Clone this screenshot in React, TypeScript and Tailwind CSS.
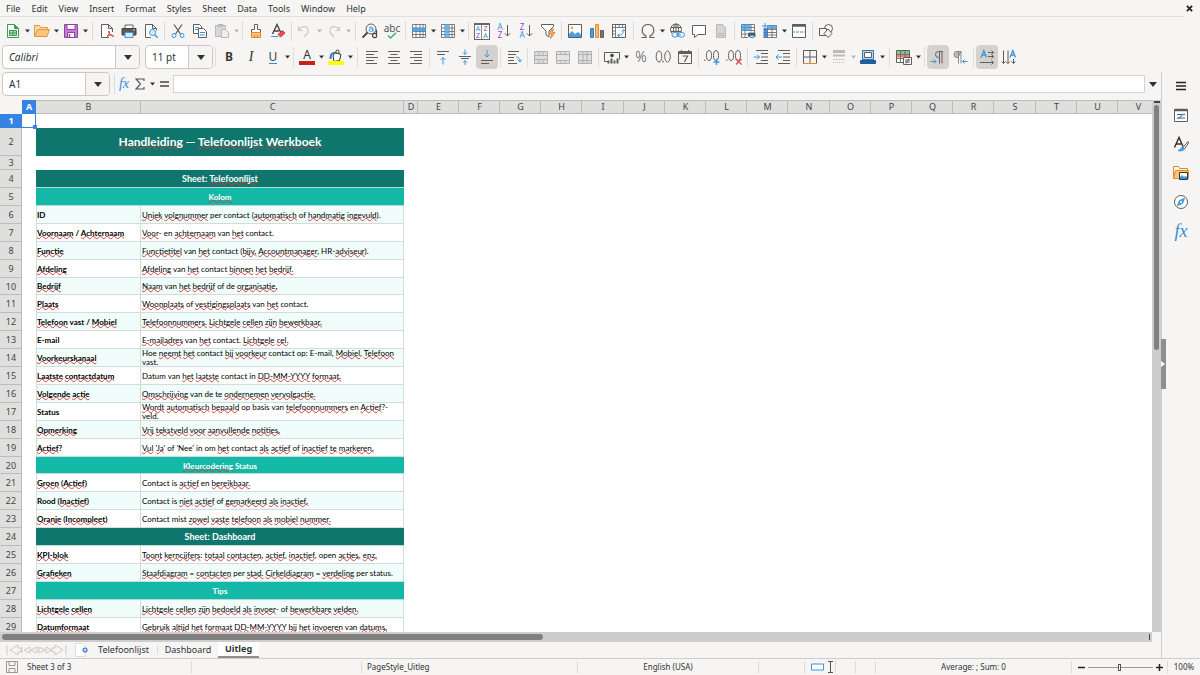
import type { ReactNode } from "react";

const G = "#5e5e5e";
const B = "#3a96dd";

function Svg({ children, w = 16 }: { children: ReactNode; w?: number }) {
  return (
    <svg width={w} height="16" viewBox={`0 0 ${w} 16`} fill="none" stroke={G} strokeWidth="1" className="shrink-0" aria-hidden="true">
      {children}
    </svg>
  );
}

const grid = <path d="M1.5 1.5h13v13h-13zM1.5 5h13M1.5 8.500h13M1.500 11.500h13M5 1.500v13M9 1.500v13M12 1.500v13" strokeWidth=".8" />;
const pilcrow = <path d="M13 2.500H8.500a3 3 0 0 0 0 6H9M9.500 2.500v12M12 2.500v12" />;

const icons: Record<string, ReactNode> = {
  "New": <Svg><path d="M2.500 1.500h7l4 4v9h-11z" stroke="#3f9b52" fill="#fff" /><path d="M9.500 1.500v4h4z" fill="#3f9b52" stroke="#3f9b52" /><path d="M4.500 7.500h7v5h-7zM4.500 10h7M8 7.500v5" stroke="#3f9b52" fill="#a9dcb4" /></Svg>,
  "Open": <Svg><path d="M.5 13.500v-11h5l1 2h7v2" stroke="#e09a3c" fill="#f8dca8" /><path d="M.5 13.500l3-7h12l-2.500 7z" stroke="#e09a3c" fill="#fbc678" /></Svg>,
  "Save": <Svg><path d="M1.500 1.500h13v13h-13z" stroke="#8d42a5" fill="#c37fd4" /><path d="M4 1.500h8v5H4z" fill="#fff" stroke="#8d42a5" /><path d="M4.500 9.500h7v5h-7z" fill="#fff" stroke="#8d42a5" /><path d="M6.500 11v3" stroke="#8d42a5" strokeWidth="1.500" /></Svg>,
  "Export as PDF": <Svg><path d="M10 14.500H2.500v-13h7l4 4V9M9.500 1.500v4h4" fill="#fff" /><path d="M9.500 8c1 3 2.500 5 5.500 5.500M7.500 14.500c2-1 3-3.500 2.500-6.500M8 13c2-1 4-1.500 6-.5" stroke="#d8343e" /></Svg>,
  "Print": <Svg><path d="M4 6V2h8v4" fill="#fff" /><path d="M1 5.500h14V12H1z" fill="#5a5a5a" stroke="#444" /><path d="M4 9.500h8v5H4z" fill="#d7ebfa" stroke={B} /><path d="M12 7h1.500" stroke="#fff" /></Svg>,
  "Print Preview": <Svg><path d="M8 14.500H2.500v-13h7l4 4v2M9.500 1.500v4h4" fill="#fff" /><circle cx="9.500" cy="9.500" r="3" stroke={B} fill="#d7ebfa" /><path d="M11.700 11.700l3 3" stroke={B} strokeWidth="1.400" /></Svg>,
  "Cut": <Svg><path d="M4 1.500l6.500 9.500M12 1.500L5.500 11" strokeWidth="1.300" /><circle cx="4" cy="12.500" r="2" stroke={B} /><circle cx="12" cy="12.500" r="2" stroke={B} /></Svg>,
  "Copy": <Svg><path d="M1.500 1.500h6l2 2v7h-8z" fill="#fff" /><path d="M3 4.500h4M3 6.500h4" stroke={B} /><path d="M6.500 5.500h5l3 3v6h-8z" fill="#fff" /><path d="M8 9.500h5M8 12h5" stroke={B} /></Svg>,
  "Paste": <Svg><g stroke="#b9b9b9"><path d="M1.500 2.500h10v11h-10z" fill="#d9d9d9" /><path d="M4 1.500h5v2H4z" fill="#c4c4c4" /><path d="M7.500 6.500h4l3 3v5h-7z" fill="#eee" /></g></Svg>,
  "Clone Formatting": <Svg><path d="M6.500 1.500h3v5h3v3h-9v-3h3z" fill="#fff" /><path d="M3.500 9.500h9v5h-9z" fill="#f5c383" stroke="#e08a2c" /><path d="M6.500 12v2.500M9.500 12v2.500" stroke="#e08a2c" /></Svg>,
  "Clear Formatting": <Svg><path d="M2.500 11L7 1.500 11 10M4 8h5" strokeWidth="1.400" stroke="#444" /><path d="M1 13.500h7" stroke={B} /><path d="M8 11.500l4.500-4 2.500 2.500-4.500 4z" fill="#e8505b" stroke="#d8343e" /></Svg>,
  "Undo": <Svg><path d="M1.500 3.500v4H5.500M1.800 7.300c2-4 6-4.500 8.200-2.500s1.500 5.500-3 9" stroke="#c9c9c9" strokeWidth="1.200" /></Svg>,
  "Redo": <Svg><path d="M13.500 3.500v4H9.500M13.200 7.300c-2-4-6-4.500-8.200-2.500s-1.500 5.500 3 9" stroke="#c9c9c9" strokeWidth="1.200" /></Svg>,
  "Find and Replace": <Svg><circle cx="9" cy="6" r="5" /><path d="M5.500 9.500l-5 5" strokeWidth="1.800" stroke="#444" /><path d="M7 4.500c3-1 4 0 4 1.500v2.500M11 6c-4-.5-4.500 1-3.500 2s3 .5 3.500-.5" stroke={B} /><path d="M14.500 7v7.500M14.500 11c-2-1.500-4 0-4 1.500s2 3 4 1.500" stroke="#444" strokeWidth="1.200" /></Svg>,
  "Column": <Svg><path d="M1.500 1.500h13v13h-13z" fill="#fff" stroke="none" />{grid}<path d="M5 1.500h4v13H5z" fill="#5fb4f0" fillOpacity=".9" stroke="none" /></Svg>,
  "Row": <Svg><path d="M1.500 1.500h13v13h-13z" fill="#fff" stroke="none" />{grid}<path d="M1.500 5h13v3.500h-13z" fill="#3fa2ea" fillOpacity=".9" stroke="none" /></Svg>,
  "Insert Image": <Svg><path d="M1.500 1.500h13v13h-13z" fill="#fff" /><path d="M2 14v-3l3-3 3 3 3-2 3 2.500V14z" fill="#4a9fe0" stroke="none" /><circle cx="5" cy="4.800" r="1.400" fill="#f0a347" stroke="none" /></Svg>,
  "Insert Chart": <Svg><path d="M1.500 5.500h3v9h-3z" fill="#4a9fe0" stroke="#2f7fc4" /><path d="M6.500 1.500h3v13h-3z" fill="#f7bd76" stroke="#e08a2c" /><path d="M11.500 7.500h3v7h-3z" fill="#777" /></Svg>,
  "Pivot Table": <Svg><path d="M1.500 1.500h13v13h-13z" fill="#fff" /><path d="M1.500 4.500h13M4.500 1.500v13M8 1.500v3M11.500 1.500v3M1.500 8h3M1.500 11h3" strokeWidth=".8" /><path d="M6.500 12.500c4 0 6-2 6-5M10.500 8.500l2-2 2 2M8.500 10.500l-2 2 2 2" stroke={B} /></Svg>,
  "Special Character": <Svg><path d="M1.500 14.500h4.500v-1.500C0 10 1.500 1.500 8 1.500S16 10 10 13v1.500h4.500" strokeWidth="1.200" /></Svg>,
  "Hyperlink": <Svg><circle cx="7" cy="6.500" r="5.500" /><ellipse cx="7" cy="6.500" rx="2.500" ry="5.500" /><path d="M2 4.500h10M2 8.500h10M7 1v11" /><rect x="3" y="9.500" width="6" height="4.500" rx="2.200" fill="#f6f5f4" stroke={B} /><rect x="9" y="9.500" width="6.500" height="4.500" rx="2.200" fill="#f6f5f4" stroke={B} /><path d="M7 11.800h5" stroke={B} /></Svg>,
  "Insert Comment": <Svg><path d="M1.500 2.500h13v9H7l-3.500 3v-3h-2z" fill="#fff" /></Svg>,
  "Headers and Footers": <Svg><path d="M3.500 1.500h6l3 3v10h-9z" fill="#d4d4d4" stroke="#b9b9b9" /><path d="M5 10.500h6M5 12.500h6" stroke="#b9b9b9" /></Svg>,
  "Define Print Area": <Svg><path d="M1.500 1.500h13v13h-13z" fill="#fff" stroke="none" /><path d="M1.500 1.500h13v10M1.500 1.500v13H8M1.500 4.500h13M1.500 7.500h13M1.500 11h7M5 1.500v13M11 1.500v7" strokeWidth=".8" /><path d="M1.500 1.500h9v6h-9z" fill="#3fa2ea" fillOpacity=".8" stroke="none" /><path d="M8.500 10h6.500v3.500H8.500z" fill="#555" /><path d="M10 12.500h4v2h-4z" fill="#d7ebfa" stroke={B} /></Svg>,
  "Freeze Rows and Columns": <Svg><path d="M1.500 3h13v11.500h-13z" fill="#fff" stroke="none" /><path d="M1.500 6.500h13M1.500 9.500h13M1.500 12h13M5.500 3v11.500M10 3v11.500M1.500 14.500h13V2.500h-9" strokeWidth=".8" /><path d="M1.500 5h4v9.500h-4z" fill="#2f80d0" fillOpacity=".85" stroke="none" /><path d="M5.500 2.500h9v3.500h-9z" fill="#4a9fe0" fillOpacity=".85" stroke="none" /><path d="M0 3h6M3 0v6" stroke={B} /></Svg>,
  "Split Window": <Svg><path d="M1.500 1.500h13v13h-13z" fill="#fff" /><path d="M1.500 2.500h13" strokeWidth="2.500" /><path d="M1 9h14" stroke={B} strokeDasharray="3 1" /></Svg>,
  "Show Draw Functions": <Svg><circle cx="10.500" cy="5.500" r="4" /><path d="M1.500 5.500h7v7h-7z" fill="#f6f5f4" /><path d="M10 6l4 4.500-4 4-4-4z" fill="#f6f5f4" /></Svg>,
  "Background Color": <Svg><path d="M7 3.500l6 2-1.500 6-5.500 1L5 7z" fill="#fff" stroke="#333" /><path d="M8 5V2.500a1.500 1.500 0 0 1 3 0V5" stroke="#333" /><path d="M7 4C3.500 3.500 2.500 6 2.500 10" stroke="#2f7fc4" strokeWidth="2" /></Svg>,
  "Align Left": <Svg><path d="M2 2.500h12M2 5.500h8M2 8.500h12M2 11.500h8M2 14.500h11" /></Svg>,
  "Center Horizontally": <Svg><path d="M2 2.500h12M4.500 5.500h7M2 8.500h12M4.500 11.500h7M2 14.500h12" /></Svg>,
  "Align Right": <Svg><path d="M2 2.500h12M6 5.500h8M2 8.500h12M6 11.500h8M2 14.500h12" /></Svg>,
  "Align Top": <Svg><path d="M2 2.500h12M2 5.500h8" /><path d="M8 15.500V8.500M5.500 11L8 8.500l2.500 2.500" stroke={B} /></Svg>,
  "Center Vertically": <Svg><path d="M2 7.500h12M4 9.500h8" /><path d="M8 .5v5M6 3.500l2 2 2-2M8 16v-4.500M6 13.500l2-2 2 2" stroke={B} /></Svg>,
  "Align Bottom": <Svg><path d="M2 11.500h12M2 14.500h8" /><path d="M8 1v7M5.500 5.500L8 8l2.500-2.500" stroke={B} /></Svg>,
  "Wrap Text": <Svg><path d="M2 2.500h11M2 5.500h8M2 8.500h6M2 11.500h6M2 14.500h9" /><path d="M10 8c2 0 4 1 4 4.500M11.500 10.500l2.500 2.500 1.500-2.500" stroke={B} /></Svg>,
  "Merge and Center": <Svg><g stroke="#b0b0b0"><path d="M1.500 2.500h13v12h-13z" fill="#dedede" /><path d="M1.500 6.500h13M1.500 10.500h13M6 2.500v4M10 2.500v4M6 10.500v4M10 10.500v4" /></g></Svg>,
  "Merge Cells": <Svg><g stroke="#b0b0b0"><path d="M1.500 2.500h13v12h-13z" fill="#e4e4e4" /><path d="M1.500 5.500h13M1.500 11.500h13M6 2.500v3M10 2.500v3M6 11.500v3M10 11.500v3" /></g></Svg>,
  "Split Cells": <Svg><g stroke="#b0b0b0"><path d="M1.500 2.500h13v12h-13z" fill="#dedede" /><path d="M1.500 5.500h13M1.500 11.500h13M6 2.500v12M10 2.500v12" /></g></Svg>,
  "Currency": <Svg><path d="M4 12.500H.5v-9h15v7" /><circle cx="8" cy="6.500" r="1.800" fill="#444" stroke="none" /><path d="M4.500 14.500v-3M7.500 14.500v-5M10.500 14.500v-3M13.500 14.500v-5" strokeWidth="2" /></Svg>,
  "Date": <Svg><path d="M1.500 2.500h13v12h-13z" /><path d="M1.500 4h13" strokeWidth="2" /><path d="M4.500 1v3M11.500 1v3" /><path d="M5.500 7h5l-3 6" strokeWidth="1.200" /></Svg>,
  "Increase Indent": <Svg><path d="M3 1.500h12M8 4.500h7M8 8h7M8 11.500h7M3 14.500h12" /><path d="M.5 8h6M4 5.500L6.500 8 4 10.500" stroke={B} /></Svg>,
  "Decrease Indent": <Svg><path d="M3 1.500h12M8 4.500h7M8 8h7M8 11.500h7M3 14.500h12" /><path d="M7 8H1M3.500 5.500L1 8l2.500 2.500" stroke={B} /></Svg>,
  "Borders": <Svg><path d="M1.500 14.500v-13h13v13M8 1.500v13M1.500 8h13" fill="none" /><path d="M1.500 14.500h13" stroke="#e08a2c" /></Svg>,
  "Border Style": <Svg><g stroke="#bababa"><path d="M2 2.500h12" strokeWidth="3" /><path d="M2 6.500h12" strokeWidth="2" /><path d="M2 10.500h12" strokeDasharray="2 1" /><path d="M2 13.500h12" strokeDasharray="1 1" /></g></Svg>,
  "Border Color": <Svg><path d="M2.500 1.500h11v9h-11z" fill="#b9d9f2" stroke="#3a6ea5" /><path d="M4.500 3.500h7v5h-7z" fill="#fff" /><path d="M.5 11.500h15v3H.5z" fill="#1f5c9e" stroke="#1f5c9e" /></Svg>,
  "Conditional Formatting": <Svg><path d="M.5 1.500h13v12H.5z" fill="#fff" /><path d="M1 2h12v3H1z" fill="#7fc78c" stroke="none" /><path d="M1 5.500h12v3H1z" fill="#ee8077" stroke="none" /><path d="M.5 5.500h13M.5 9.500h13M4.500 1.500v12M9 1.500v12" strokeWidth=".8" /><path d="M7.500 8.500h8v7h-8z" fill="#fff" /><path d="M9 11h5M9 13h5M13 9.500l-3 5" /></Svg>,
  "Left-To-Right": <Svg>{pilcrow}<path d="M.5 12.500h5.500M4 10.500l2 2-2 2" stroke={B} /></Svg>,
  "Right-To-Left": <Svg><path d="M9 2.500H5a3 3 0 0 0 0 6h1zM6.500 2.500v12M9 2.500v12" fill="#bbb" stroke="#888" /><path d="M15.500 12.500H10.500M12.500 10.500l-2 2 2 2" stroke={B} /></Svg>,
};

function LetterIcon({ label }: { label: string }) {
  switch (label) {
    case "Spelling":
      return (
        <span className="flex flex-col items-center">
          <span className="text-[10px] leading-[8px] text-[#555]">abc</span>
          <svg width="10" height="7" viewBox="0 0 10 7" fill="none" stroke="#3fb36b" strokeWidth="1.500"><path d="M1 3.500L3.500 6 9 .8" /></svg>
        </span>
      );
    case "Sort":
      return (
        <span className="grid w-4 grid-cols-2 border border-t-2 border-[#666] bg-white text-center text-[7px] leading-[7px]">
          <span className="border-r border-[#888] text-[#2f8fd8]">A</span><span className="text-[#a43fc0]">Z</span>
          <span className="border-r border-[#888] text-[#a43fc0]">Z</span><span className="text-[#2f8fd8]">A</span>
        </span>
      );
    case "Sort Ascending":
    case "Sort Descending": {
      const up = label === "Sort Ascending";
      return (
        <span className="flex items-center gap-px text-[8px] leading-[8px]">
          <span className="flex flex-col">
            {up ? <><span className="text-[#2f8fd8]">A</span><span className="text-[#a43fc0]">Z</span></> : <><span className="text-[#a43fc0]">Z</span><span className="text-[#2f8fd8]">A</span></>}
          </span>
          <svg width="7" height="14" viewBox="0 0 7 14" fill="none" stroke={G}><path d="M3.500 1v11M.8 9.300l2.700 2.700 2.700-2.700" /></svg>
        </span>
      );
    }
    case "AutoFilter":
      return <Svg><path d="M1.500 1.500h12v2L9 8v6l-3-2V8L1.500 3.500z" fill="#fff" /><path d="M12 6l-3 5h3l-1.500 4.500 4.500-6h-3l1.500-3.500z" fill="#f7bd76" stroke="#e08a2c" /></Svg>;
    case "Bold":
      return <b className="text-[12px] leading-4 text-[#3c3c3c]">B</b>;
    case "Italic":
      return <i className="font-['Liberation_Serif',serif] text-sm leading-4 text-[#333]">I</i>;
    case "Underline":
      return <span className="border-b border-[#2f8fd8] text-[12px] leading-[12px] text-[#444]">U</span>;
    case "Font Color":
      return <span className="flex flex-col items-center text-[12px] leading-[12px] text-[#333]">A<span className="h-1 w-4 bg-[#c9211e]" /></span>;
    case "Background Color":
      return <span className="flex h-4 flex-col items-center"><span className="flex h-3 items-start overflow-hidden">{icons[label]}</span><span className="h-1 w-4 shrink-0 bg-[#ffff00]" /></span>;
    case "Percent":
      return <span className="text-[14px] leading-4 font-light text-[#555]">%</span>;
    case "Number":
      return <Svg><ellipse cx="4" cy="7.500" rx="2.800" ry="5.500" /><ellipse cx="12.500" cy="7.500" rx="2.800" ry="5.500" /><path d="M8 11.500v2" /></Svg>;
    case "Add Decimal Place":
    case "Delete Decimal Place":
      return (
        <Svg>
          <ellipse cx="5" cy="6.500" rx="2.500" ry="5" /><ellipse cx="12" cy="6.500" rx="2.500" ry="5" /><path d="M.8 10.500v1.500" />
          {label === "Add Decimal Place" ? <path d="M9.500 13h6M12.500 10v6" stroke={B} strokeWidth="1.300" /> : <path d="M10 10l5.500 5.500M15.500 10L10 15.500" stroke="#e5484d" strokeWidth="1.300" />}
        </Svg>
      );
    case "Text From Left":
      return <Svg><path d="M2 8.500L4.800 1.500 7.500 8.500M3 6h4" stroke={B} strokeWidth="1.300" /><path d="M9 3.500h5.500M9 7.500h5.500M1 13.500h13.500M12.500 1.500l2 2-2 2M12.500 5.500l2 2-2 2M12.500 11.500l2 2-2 2" /></Svg>;
    case "Text From Top":
      return <Svg><path d="M9 8.500L11.800 1.500 14.500 8.500M10 6h4" stroke={B} strokeWidth="1.300" /><path d="M2.500 1.500v13M7 1.500v13M12.500 10v4.500M.5 12.500l2 2 2-2M5 12.500l2 2 2-2M10.500 12.500l2 2 2-2" /></Svg>;
    default:
      return <>{icons[label]}</>;
  }
}

function Arrow({ pale = false, wide = false }: { pale?: boolean; wide?: boolean }) {
  return (
    <svg width={wide ? 8 : 5} height={wide ? 5 : 4} viewBox="0 0 8 5" className="shrink-0" aria-hidden="true">
      <path d="M0 0h8L4 5z" fill={pale ? "#b5b5b5" : "#2e3436"} />
    </svg>
  );
}

type Item = string | { label: string; menu?: boolean; pressed?: boolean; pale?: boolean };

function Tools({ items }: { items: Item[] }) {
  return (
    <>
      {items.map((item, i) => {
        if (item === "|" || item === "||")
          return (
            <span key={i} className={item === "|" ? "flex w-[5px] shrink-0 justify-center" : "flex w-[7px] shrink-0 justify-center"}>
              <span className="h-5 w-px bg-[#e0dedc]" />
            </span>
          );
        const t = typeof item === "string" ? { label: item } : item;
        return (
          <span key={i} className="flex shrink-0 items-center">
            <button type="button" aria-label={t.label} className={t.pressed ? "flex h-6 w-[22px] items-center justify-center rounded-sm bg-[#d5d2ce]" : "flex h-6 w-[22px] items-center justify-center rounded-sm"}>
              <LetterIcon label={t.label} />
            </button>
            {t.menu && (
              <button type="button" aria-label={`${t.label} options`} className="flex h-6 w-[7px] items-center justify-center">
                <Arrow pale={t.pale} />
              </button>
            )}
          </span>
        );
      })}
    </>
  );
}

const m = (label: string, pale = false): Item => ({ label, menu: true, pale });
const on = (label: string): Item => ({ label, pressed: true });

const standardBar: Item[] = [
  m("New"), m("Open"), m("Save"), "||", "Export as PDF", "Print", "Print Preview", "|", "Cut", "Copy", m("Paste", true), "|",
  "Clone Formatting", "Clear Formatting", "|", m("Undo", true), m("Redo", true), "||", "Find and Replace", "Spelling", "|",
  m("Row"), m("Column"), "|", "Sort", "Sort Ascending", "Sort Descending", "AutoFilter", "|",
  "Insert Image", "Insert Chart", "Pivot Table", "||", m("Special Character"), "Hyperlink", "Insert Comment", "Headers and Footers", "|",
  "Define Print Area", m("Freeze Rows and Columns"), "Split Window", "|", "Show Draw Functions",
];

const formatBar: Item[] = [
  "|", "Bold", "Italic", m("Underline"), "|", m("Font Color"), m("Background Color"), "||",
  "Align Left", "Center Horizontally", "Align Right", "|", "Align Top", "Center Vertically", on("Align Bottom"), "|", "Wrap Text", "|",
  "Merge and Center", "Merge Cells", "Split Cells", "|", m("Currency"), "Percent", "Number", "Date", "|",
  "Add Decimal Place", "Delete Decimal Place", "|", "Increase Indent", "Decrease Indent", "|",
  m("Borders"), m("Border Style", true), m("Border Color"), "||", m("Conditional Formatting"), "|",
  on("Left-To-Right"), "Right-To-Left", "|", on("Text From Left"), "Text From Top",
];

function Combo({ id, label, value, className, italic = false }: { id: string; label: string; value: string; className: string; italic?: boolean }) {
  return (
    <div className={`flex h-6 shrink-0 rounded border border-[#cdc7c2] bg-white ${className}`}>
      <input id={id} aria-label={label} defaultValue={value} className={italic ? "min-w-0 flex-1 px-1.5 text-[10px] leading-4 text-[#2e3436] italic outline-none" : "min-w-0 flex-1 px-1.5 text-[10px] leading-4 text-[#2e3436] outline-none"} />
      <button type="button" aria-label={`${label} list`} className="flex w-6 items-center justify-center rounded-r border-l border-[#cdc7c2] bg-[#f6f5f4]">
        <Arrow wide />
      </button>
    </div>
  );
}

// Words between tildes are flagged by the spell checker.
function Spelled({ text }: { text: string }) {
  return (
    <>
      {text.split("~").map((part, i) =>
        i % 2 ? (
          <span key={i} className="underline decoration-[#d43a3a] decoration-wavy decoration-1 -underline-offset-1 [text-decoration-skip-ink:none]">{part}</span>
        ) : (
          part
        ),
      )}
    </>
  );
}

type Row = { h: number; kind: "blank" | "title" | "sheet" | "section" | "data"; a?: string; b?: string; tint?: boolean };
const d = (a: string, b: string, tint: boolean, h = 18): Row => ({ h, kind: "data", a, b, tint });

const rows: Row[] = [
  { h: 14, kind: "blank" },
  { h: 28, kind: "title", a: "~Handleiding~ — ~Telefoonlijst~ ~Werkboek~" },
  { h: 14, kind: "blank" },
  { h: 18, kind: "sheet", a: "Sheet: ~Telefoonlijst~" },
  { h: 18, kind: "section", a: "~Kolom~" },
  d("ID", "~Uniek~ ~volgnummer~ per contact (~automatisch~ of ~handmatig~ ~ingevuld~).", true),
  d("~Voornaam~ / ~Achternaam~", "~Voor~- en ~achternaam~ van ~het~ contact.", false),
  d("~Functie~", "~Functietitel~ van ~het~ contact (~bijv.~ ~Accountmanager~, HR-~adviseur~).", true),
  d("~Afdeling~", "~Afdeling~ van ~het~ contact ~binnen~ ~het~ ~bedrijf.~", false),
  d("~Bedrijf~", "~Naam~ van ~het~ ~bedrijf~ of de ~organisatie.~", true, 17),
  d("~Plaats~", "~Woonplaats~ of ~vestigingsplaats~ van ~het~ contact.", false),
  d("~Telefoon~ vast / ~Mobiel~", "~Telefoonnummers.~ ~Lichtgele~ ~cellen~ ~zijn~ ~bewerkbaar.~", true),
  d("E-mail", "~E-mailadres~ van ~het~ contact. ~Lichtgele~ ~cel.~", false),
  d("~Voorkeurskanaal~", "Hoe ~neemt~ ~het~ contact ~bij~ ~voorkeur~ contact op: E-mail, ~Mobiel~, ~Telefoon~ vast.", true),
  d("~Laatste~ ~contactdatum~", "Datum van ~het~ ~laatste~ contact in ~DD-MM-YYYY~ ~formaat.~", false),
  d("~Volgende~ ~actie~", "~Omschrijving~ van de te ~ondernemen~ ~vervolgactie.~", true),
  d("Status", "~Wordt~ ~automatisch~ ~bepaald~ op basis van ~telefoonnummers~ en ~Actief~?-veld.", false),
  d("~Opmerking~", "~Vrij~ ~tekstveld~ ~voor~ ~aanvullende~ ~notities.~", true),
  d("~Actief~?", "~Vul~ '~Ja~' of 'Nee' in om ~het~ contact ~als~ ~actief~ of ~inactief~ ~te~ ~markeren.~", false),
  { h: 17, kind: "section", a: "~Kleurcodering~ Status" },
  d("~Groen~ (~Actief~)", "Contact is ~actief~ en ~bereikbaar.~", false),
  d("Rood (~Inactief~)", "Contact is ~niet~ ~actief~ of ~gemarkeerd~ ~als~ ~inactief.~", true),
  d("~Oranje~ (~Incompleet~)", "Contact mist ~zowel~ ~vaste~ ~telefoon~ ~als~ ~mobiel~ ~nummer.~", false),
  { h: 18, kind: "sheet", a: "Sheet: Dashboard" },
  d("~KPI-blok~", "~Toont~ ~kerncijfers~: ~totaal~ ~contacten~, ~actief~, ~inactief~, open ~acties~, ~enz.~", false),
  d("~Grafieken~", "~Staafdiagram~ = ~contacten~ per ~stad.~ ~Cirkeldiagram~ = ~verdeling~ per status.", true),
  { h: 18, kind: "section", a: "Tips" },
  d("~Lichtgele~ ~cellen~", "~Lichtgele~ ~cellen~ ~zijn~ ~bedoeld~ ~als~ ~invoer~- of ~bewerkbare~ ~velden.~", true),
  d("~Datumformaat~", "~Gebruik~ ~altijd~ ~het~ ~formaat~ ~DD-MM-YYYY~ ~bij~ ~het~ ~invoeren~ van ~datums.~", false),
];

const columns: [string, number][] = [
  ["A", 14], ["B", 105], ["C", 263], ["D", 14], ["E", 41], ["F", 41], ["G", 41], ["H", 41], ["I", 42], ["J", 41], ["K", 41],
  ["L", 41], ["M", 41], ["N", 42], ["O", 41], ["P", 41], ["Q", 41], ["R", 41], ["S", 42], ["T", 41], ["U", 41], ["V", 41],
];

const bandStyle = {
  title: "bg-[#0f766e] text-[12px] leading-4",
  sheet: "bg-[#0f766e] text-[9px] leading-3 shadow-[inset_0_-1px_0_#b9dcd8]",
  section: "bg-[#14b8a6] text-[8px] leading-3 shadow-[inset_0_-1px_0_#b9dcd8]",
};

function Sheet() {
  return (
    <table className="w-[1158px] table-fixed border-separate border-spacing-0">
      <colgroup>
        <col style={{ width: 22 }} />
        {columns.map(([name, w]) => <col key={name} style={{ width: w }} />)}
      </colgroup>
      <thead>
        <tr className="h-[14px] text-[9px] leading-3 text-[#444]">
          <td className="bg-[#f6f5f4] p-0" />
          {columns.map(([name]) => (
            <th key={name} scope="col" className={name === "A" ? "bg-[#3584e4] p-0 font-bold text-white" : "bg-[#dfdfde] p-0 font-normal shadow-[inset_-1px_-1px_0_#bcbcbc,inset_0_1px_0_#bcbcbc]"}>{name}</th>
          ))}
        </tr>
      </thead>
      <tbody>
        {rows.map((r, i) => (
          <tr key={i} style={{ height: r.h }}>
            <th scope="row" className={i === 0 ? "bg-[#3584e4] p-0 text-[9px] leading-3 font-bold text-white" : "bg-[#dfdfde] p-0 text-[9px] leading-3 font-normal text-[#444] shadow-[inset_-1px_-1px_0_#bcbcbc]"}>{i + 1}</th>
            <td className="relative p-0">
              {i === 0 && (
                <span className="absolute inset-0 border-r border-b border-[#3584e4]">
                  <span className="absolute -right-0.5 -bottom-0.5 size-1 bg-[#3584e4]" />
                </span>
              )}
            </td>
            {r.kind === "blank" && <td colSpan={21} />}
            {(r.kind === "title" || r.kind === "sheet" || r.kind === "section") && (
              <td colSpan={2} className={`p-0 text-center font-['Lato',sans-serif] font-bold text-white ${bandStyle[r.kind]}`}>
                <Spelled text={r.a ?? ""} />
              </td>
            )}
            {r.kind === "data" && (
              <>
                <td className={`p-0 pl-px font-['Lato',sans-serif] text-[8px] leading-[9px] font-bold whitespace-nowrap text-black shadow-[inset_-1px_-1px_0_#cfdedd,inset_1px_0_0_#cfdedd] ${r.tint ? "bg-[#f0fdfa]" : "bg-white"}`}>
                  <Spelled text={r.a ?? ""} />
                </td>
                <td className={`py-0 pr-1 pl-px font-['Lato',sans-serif] text-[8px] leading-[9px] text-black shadow-[inset_-1px_-1px_0_#cfdedd] ${r.tint ? "bg-[#f0fdfa]" : "bg-white"}`}>
                  <Spelled text={r.b ?? ""} />
                </td>
              </>
            )}
          </tr>
        ))}
      </tbody>
    </table>
  );
}

const sidebar: [string, ReactNode][] = [
  ["Sidebar Settings", <Svg key="m"><path d="M3 4.500h10M3 8h10M3 11.500h10" stroke="#222" strokeWidth="1.500" /></Svg>],
  ["Properties", <Svg key="p"><path d="M1.500 2.500h13v12h-13z" fill="#fff" /><path d="M1.500 3h13" strokeWidth="2.500" /><path d="M4 7.500h8M4 11h8" /><path d="M9.500 7.500h2M4.500 11h2M9.500 7L6.500 11.500" stroke={B} strokeWidth="1.300" /></Svg>],
  ["Styles", <Svg key="s"><path d="M1.500 11.500L6 1.500l4 9M3 8h5" stroke="#333" strokeWidth="1.500" /><path d="M15 5.500l-5 6 1.500 1.500 4-6z" fill="#fff" /><path d="M10 11c-2 0-2 3-5 3.500 3 1 6 0 6.500-2z" fill="#4a9fe0" stroke={B} /></Svg>],
  ["Gallery", <Svg key="g"><path d="M.5 12.500V1.500h5l1 2h8v2H3z" fill="#fff" stroke="#e08a2c" /><path d="M.5 13.500l2-8h13v8z" fill="#fbc678" stroke="#e08a2c" /><path d="M6.500 7.500h8v7h-8z" fill="#fff" stroke="#333" /><path d="M7 14v-2l2-2 2 2 1.500-1 1.500 1v2z" fill={B} stroke="none" /></Svg>],
  ["Navigator", <Svg key="n"><circle cx="8" cy="8" r="6.500" fill="#fff" /><path d="M11.500 4.500l-2 5-5 2 2-5z" fill="#4a9fe0" stroke={B} /><circle cx="8" cy="8" r="1" fill="#fff" stroke="none" /></Svg>],
  ["Functions", <i key="f" className="font-['Liberation_Serif',serif] text-lg leading-4 text-[#2f8fd8]">fx</i>],
];

function Rule({ className = "h-3" }: { className?: string }) {
  return <span className={`w-px shrink-0 bg-[#dddbd8] ${className}`} />;
}

export default function App() {
  return (
    <div className="flex h-screen flex-col overflow-hidden bg-[#f6f5f4] font-['Noto_Sans','Open_Sans',sans-serif] text-[#2e3436]">
      <header className="flex flex-col">
        <nav className="flex h-4 items-center gap-[11px] pt-px pr-[5px] pl-1.5 text-[9px] leading-[15px]">
          {["File", "Edit", "View", "Insert", "Format", "Styles", "Sheet", "Data", "Tools", "Window", "Help"].map((t) => (
            <button key={t} type="button">{t}</button>
          ))}
          <button type="button" aria-label="Close" className="ml-auto pr-0.5">
            <svg width="7" height="7" viewBox="0 0 8 8" stroke="#222" strokeWidth="2"><path d="M1 1l6 6M7 1L1 7" /></svg>
          </button>
        </nav>
        <div className="mr-4 h-px bg-[#e2e0dd]" />
        <div className="flex h-7 items-center pl-0.5"><Tools items={standardBar} /></div>
        <div className="flex h-6 items-center pl-0.5">
          <Combo id="font" label="Font Name" value="Calibri" italic className="w-[138px]" />
          <Combo id="size" label="Font Size" value="11 pt" className="ml-[5px] w-[68px]" />
          <Tools items={formatBar} />
        </div>
      </header>

      <div className="mt-[3px] flex min-h-0 flex-1">
        <main className="flex min-w-0 flex-1 flex-col border-r border-[#d0cecb]">
          <div className="mb-1 flex h-6 items-center pl-0.5">
            <Combo id="cell" label="Name Box" value="A1" className="w-[108px]" />
            <Rule className="ml-1 h-5" />
            <button type="button" aria-label="Function Wizard" className="ml-0.5 w-[14px] font-['Liberation_Serif',serif] text-[14px] leading-4 text-[#2f8fd8] italic">fx</button>
            <button type="button" aria-label="Select Function" className="ml-1 flex items-center gap-[5px]">
              <svg width="10" height="12" viewBox="0 0 10 12" fill="none" stroke="#555" strokeWidth="1.200"><path d="M9 3V1H1l4.500 5L1 11h8V9" /></svg>
              <Arrow />
            </button>
            <button type="button" aria-label="Formula" className="flex w-[18px] justify-center">
              <svg width="9" height="6" viewBox="0 0 9 6" stroke="#444" strokeWidth="1.500"><path d="M0 1h9M0 5h9" /></svg>
            </button>
            <input aria-label="Input line" className="h-[18px] min-w-0 flex-1 border border-[#d5d2cf] bg-white px-1 text-[10px] outline-none" />
            <button type="button" aria-label="Expand Formula Bar" className="flex w-4 justify-center"><Arrow wide /></button>
          </div>
          <div className="flex min-h-0 flex-1">
            <div className="min-w-0 flex-1 overflow-hidden bg-white"><Sheet /></div>
            <div className="flex w-[9px] flex-col items-center bg-[#cdcdcd]">
              <span className="my-px h-[2px] w-1.5 bg-[#444]" />
              <span className="mt-px h-[46%] w-[5px] rounded-full bg-[#808080]" />
            </div>
          </div>
          <div className="mr-[9px] flex h-[10px] items-center justify-between bg-[#cdcdcd] pl-0.5">
            <span className="h-1.5 w-[47%] rounded-full bg-[#808080]" />
            <span className="mr-0.5 h-1.5 w-px bg-[#444]" />
          </div>
          <div className="flex h-4 items-center text-[9px] leading-3">
            <svg width="62" height="12" viewBox="0 0 62 12" fill="none" stroke="#c9c9c9" className="ml-1.5 shrink-0" aria-hidden="true">
              <path d="M1 1v10M12 1L4 6l8 5V8h3V4h-3zM16 3v6M24 3l-6 3 6 3zM31 3l-6 3 6 3zM33 3l6 3-6 3zM40 3l6 3-6 3zM49 1l8 5-8 5V8h-3V4h3zM60 1v10" />
            </svg>
            <button type="button" aria-label="Add Sheet" className="ml-[7px]">
              <svg width="13" height="14" viewBox="0 0 13 14"><path d="M.5.5h7l3 3v10H.5z" fill="#fff" stroke="#ddd" /><circle cx="10" cy="7" r="2.500" fill="#2f6fc0" /><path d="M8.500 7h3M10 5.500v3" stroke="#fff" /></svg>
            </button>
            <button type="button" className="ml-0.5 w-[67px] text-center">Telefoonlijst</button>
            <Rule className="h-2" />
            <button type="button" className="w-[60px] text-center">Dashboard</button>
            <button type="button" className="h-4 w-[41px] border-b-2 border-[#8f8f8f] bg-white text-center font-bold">Uitleg</button>
          </div>
        </main>
        <aside className="relative flex w-[38px] flex-col items-center">
          {sidebar.map(([label, icon], i) => (
            <button key={label} type="button" aria-label={label} className={i === 0 ? "flex h-7 w-7 items-center justify-center" : "flex h-[29px] w-7 items-center justify-center"}>{icon}</button>
          ))}
          <button type="button" aria-label="Hide Sidebar" className="absolute top-[267px] -left-px flex h-[50px] w-[5px] items-center bg-[#8f8f8f]">
            <svg width="4" height="6" viewBox="0 0 4 6"><path d="M0 0l4 3-4 3z" fill="#fff" /></svg>
          </button>
        </aside>
      </div>

      <footer className="flex h-[17px] items-center border-t border-[#cfcdca] text-[8px] leading-3">
        <svg width="12" height="12" viewBox="0 0 12 12" fill="none" stroke="#999" className="ml-1.5 shrink-0" aria-hidden="true"><path d="M.5.500h11v11H.5zM3 .5v4h6v-4M3 11.500v-4h6v4" /></svg>
        <span className="ml-[9px] w-[164px]">Sheet 3 of 3</span>
        <Rule />
        <span className="w-[169px]" />
        <Rule />
        <span className="w-[215px] pl-[5px]">PageStyle_Uitleg</span>
        <Rule />
        <span className="w-[180px] text-center">English (USA)</span>
        <Rule />
        <span className="w-[45px]" />
        <Rule />
        <span className="flex w-[30px] items-center gap-1 pl-1.5">
          <svg width="13" height="8" viewBox="0 0 13 8" aria-hidden="true"><path d="M.5 1h12v6H.5z" fill="#fff" stroke={B} /></svg>
          <svg width="5" height="12" viewBox="0 0 5 12" fill="none" stroke="#555" aria-hidden="true"><path d="M0 .5h5M0 11.500h5M2.500 0v12" /></svg>
        </span>
        <Rule />
        <span className="w-[19px]" />
        <Rule />
        <span className="w-[19px]" />
        <Rule />
        <span className="min-w-0 flex-1 text-center">Average: ; Sum: 0</span>
        <Rule />
        <button type="button" aria-label="Zoom Out" className="ml-1.5"><svg width="7" height="7" viewBox="0 0 7 7"><path d="M0 3.500h7" stroke="#222" strokeWidth="1.500" /></svg></button>
        <input type="range" aria-label="Zoom" defaultValue={48} className="mx-[3px] h-3 w-[65px] appearance-none bg-transparent [&::-webkit-slider-runnable-track]:h-px [&::-webkit-slider-runnable-track]:bg-[#999] [&::-webkit-slider-thumb]:-mt-[3px] [&::-webkit-slider-thumb]:h-[7px] [&::-webkit-slider-thumb]:w-[3px] [&::-webkit-slider-thumb]:appearance-none [&::-webkit-slider-thumb]:border [&::-webkit-slider-thumb]:border-[#555] [&::-webkit-slider-thumb]:bg-white" />
        <button type="button" aria-label="Zoom In"><svg width="7" height="7" viewBox="0 0 7 7"><path d="M0 3.500h7M3.500 0v7" stroke="#222" strokeWidth="1.500" /></svg></button>
        <Rule className="ml-1 h-3" />
        <span className="w-8 text-center">100%</span>
      </footer>
    </div>
  );
}
